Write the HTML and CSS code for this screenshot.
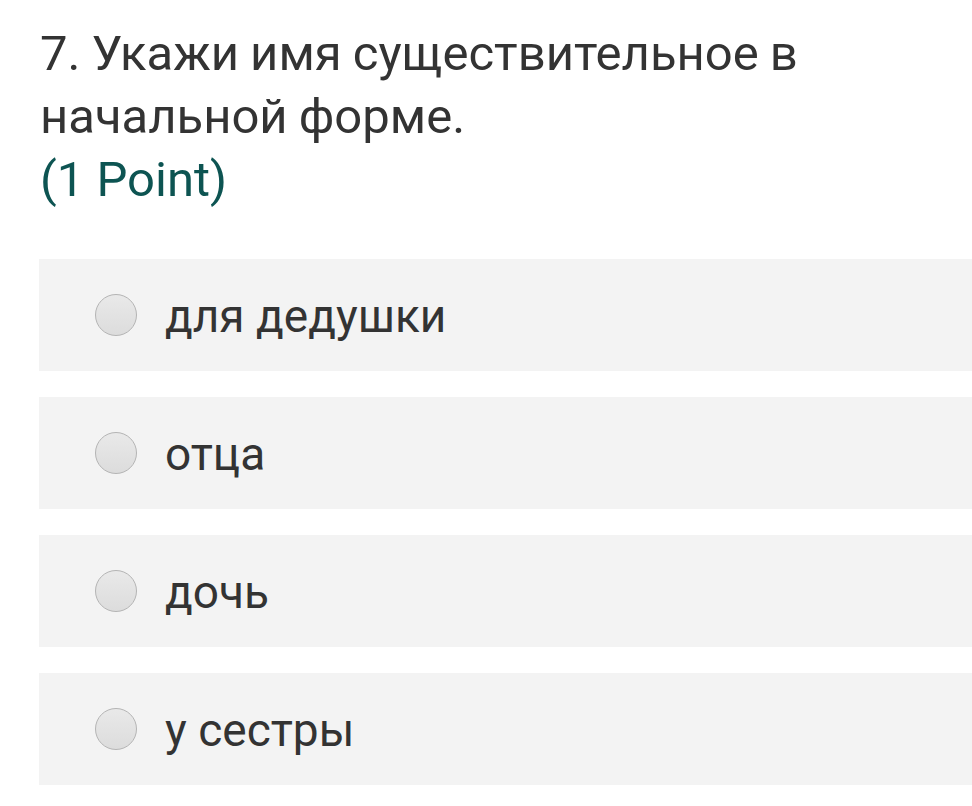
FILE: index.html
```html
<!DOCTYPE html>
<html lang="ru">
<head>
  <meta charset="UTF-8">
  <meta name="viewport" content="width=device-width, initial-scale=1.0">
  <title>Вопрос 7</title>
  <link rel="stylesheet" href="styles.css">
</head>
<body>

  <div class="question">
    <div class="question-title">
      7. Укажи имя существительное в начальной форме.
      <div class="points">(1 Point)</div>
    </div>

    <div class="choices">
      <label class="choice">
        <span class="radio"></span>
        <span class="choice-text">для дедушки</span>
      </label>
      <label class="choice">
        <span class="radio"></span>
        <span class="choice-text">отца</span>
      </label>
      <label class="choice">
        <span class="radio"></span>
        <span class="choice-text">дочь</span>
      </label>
      <label class="choice">
        <span class="radio"></span>
        <span class="choice-text">у сестры</span>
      </label>
    </div>
  </div>

</body>
</html>
```

FILE: styles.css
```css
body{
  margin:0;
  background:#fff;
  font-family: Roboto, "Noto Sans", sans-serif;
  color:#333;
  overflow:hidden;
}
.question{
  padding:22px 0 0 40px;
}
.question-title{
  font-size:49px;
  line-height:63px;
  width:820px;
  word-spacing:-1px;
}
.points{
  color:#0d5452;
  word-spacing:0;
}
.choices{
  margin-top:48px;
  display:flex;
  flex-direction:column;
  gap:26px;
  margin-left:-1px;
}
.choice{
  display:flex;
  align-items:center;
  height:112px;
  background:#f3f3f3;
  padding-left:56px;
}
.radio{
  width:42px;
  height:42px;
  border-radius:50%;
  border:1px solid #b4b4b4;
  background:linear-gradient(#e9e9e9,#dcdcdc);
  box-sizing:border-box;
}
.choice-text{
  margin-left:28px;
  font-size:46px;
  padding-top:2px;
}
```
